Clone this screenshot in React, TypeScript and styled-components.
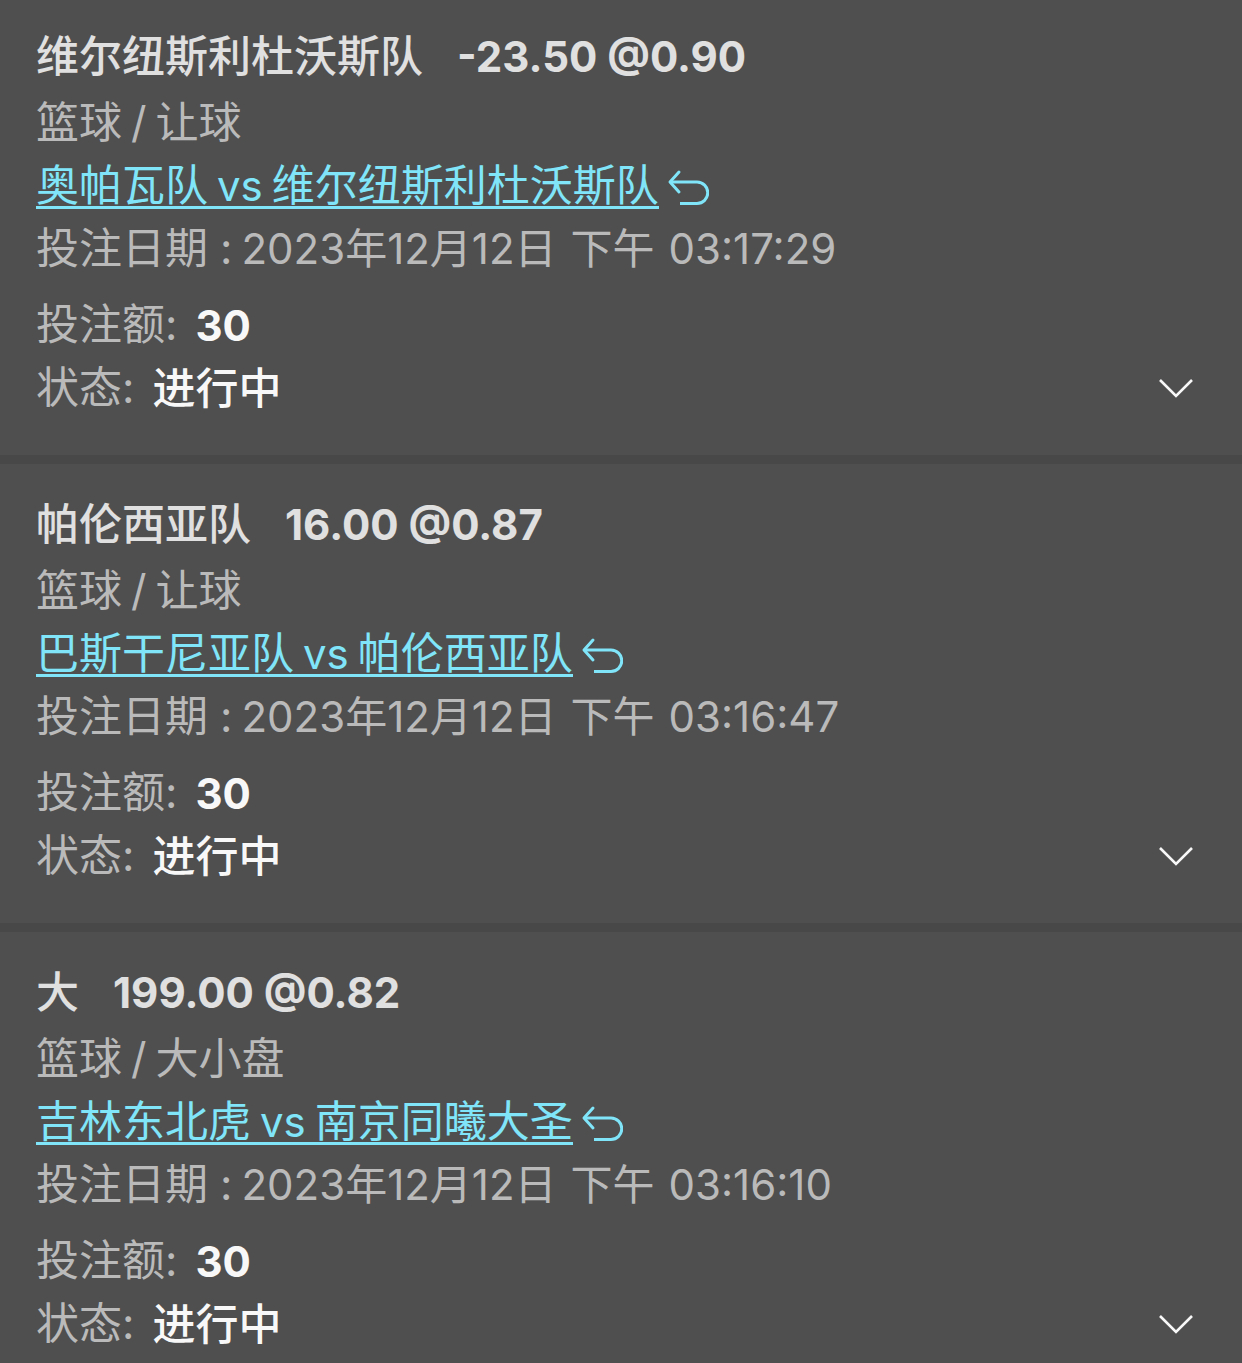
import React, { useState } from "react";
import styled, { createGlobalStyle } from "styled-components";

const GlobalStyle = createGlobalStyle`
  * { box-sizing: border-box; }
  body {
    margin: 0;
    background: #4f4f4f;
    font-family: Inter, "Noto Sans CJK SC", sans-serif;
    font-size: 43px;
    line-height: 63px;
    color: #bababa;
  }
`;

const List = styled.main`
  display: flex;
  flex-direction: column;
`;

const Card = styled.article`
  padding: 28px 36px 35px;
  border-bottom: 9px solid #484848;

  &:first-child {
    padding-top: 24px;
  }

  &:last-child {
    padding-bottom: 7px;
    border-bottom: 0;
  }
`;

const Title = styled.h2`
  display: flex;
  gap: 34px;
  margin: 0 0 2px;
  font-size: 43px;
  font-weight: 500;
  line-height: 65px;
  color: #e0e0e0;
`;

const Odds = styled.span`
  font-size: 42px;
  font-weight: 700;
`;

const Line = styled.div`
  display: flex;
  gap: 9px;
`;

const MatchLine = styled.div`
  display: flex;
  align-items: center;
  gap: 8px;
`;

const MatchLink = styled.a`
  display: flex;
  gap: 9px;
  margin: 11px 0 8px;
  border-bottom: 3px solid currentColor;
  line-height: 41px;
  color: #80e5f9;
  text-decoration: none;
`;

const Latin = styled.span`
  font-size: 42px;
`;

const Stamp = styled.time`
  display: flex;
  gap: 14px;
  font-size: 42px;
`;

const IconButton = styled.button<{ $color: string }>`
  display: flex;
  padding: 0;
  border: 0;
  background: none;
  color: ${(p) => p.$color};
  cursor: pointer;
`;

const Footer = styled.div`
  display: flex;
  align-items: flex-end;
  justify-content: space-between;
  margin-top: 14px;
  padding-right: 12px;
`;

const Facts = styled.dl`
  margin: 0;
`;

const Fact = styled.div`
  display: flex;
  gap: 18px;
`;

const Term = styled.dt`
  line-height: 61px;
`;

const Value = styled.dd<{ $numeric?: boolean }>`
  margin: 0;
  font-size: ${(p) => (p.$numeric ? 42 : 43)}px;
  font-weight: ${(p) => (p.$numeric ? 700 : 500)};
  color: #f8f8f8;
`;

const Toggle = styled(IconButton)`
  height: 65px;
  align-items: center;
`;

const ReturnIcon = () => (
  <svg width="42" height="40" viewBox="0 -4 42 40" fill="none" stroke="currentColor" strokeWidth="3" aria-hidden="true">
    <path d="M12 2 L3 12 L12 22" strokeLinecap="round" strokeLinejoin="round" />
    <path d="M3 12 H30 A10.75 10.75 0 0 1 30 33.5 H13" />
  </svg>
);

const ChevronIcon = () => (
  <svg width="36" height="20" viewBox="0 0 36 20" fill="none" stroke="currentColor" strokeWidth="2.6" aria-hidden="true">
    <path d="M2 2 L18 18 L34 2" />
  </svg>
);

type Bet = {
  pick: string;
  odds: string;
  market: string;
  home: string;
  away: string;
  time: string;
};

const bets: Bet[] = [
  {
    pick: "维尔纽斯利杜沃斯队",
    odds: "-23.50 @0.90",
    market: "让球",
    home: "奥帕瓦队",
    away: "维尔纽斯利杜沃斯队",
    time: "03:17:29",
  },
  {
    pick: "帕伦西亚队",
    odds: "16.00 @0.87",
    market: "让球",
    home: "巴斯干尼亚队",
    away: "帕伦西亚队",
    time: "03:16:47",
  },
  {
    pick: "大",
    odds: "199.00 @0.82",
    market: "大小盘",
    home: "吉林东北虎",
    away: "南京同曦大圣",
    time: "03:16:10",
  },
];

function BetCard({ bet }: { bet: Bet }) {
  const [open, setOpen] = useState(false);
  return (
    <Card>
      <Title>
        <span>{bet.pick}</span>
        <Odds>{bet.odds}</Odds>
      </Title>
      <Line>
        <span>篮球</span>
        <span>/</span>
        <span>{bet.market}</span>
      </Line>
      <MatchLine>
        <MatchLink href="#">
          <span>{bet.home}</span>
          <Latin>vs</Latin>
          <span>{bet.away}</span>
        </MatchLink>
        <IconButton type="button" $color="#80e5f9" aria-label="返回比赛">
          <ReturnIcon />
        </IconButton>
      </MatchLine>
      <Line>
        <span>投注日期 :</span>
        <Stamp>
          <span>2023年12月12日</span>
          <span>下午</span>
          <span>{bet.time}</span>
        </Stamp>
      </Line>
      <Footer>
        <Facts>
          <Fact>
            <Term>投注额:</Term>
            <Value $numeric>30</Value>
          </Fact>
          <Fact>
            <Term>状态:</Term>
            <Value>进行中</Value>
          </Fact>
        </Facts>
        <Toggle
          type="button"
          $color="#f8f8f8"
          aria-label="展开"
          aria-expanded={open}
          onClick={() => setOpen(!open)}
        >
          <ChevronIcon />
        </Toggle>
      </Footer>
    </Card>
  );
}

export default function App() {
  return (
    <>
      <GlobalStyle />
      <List>
        {bets.map((bet) => (
          <BetCard key={bet.time} bet={bet} />
        ))}
      </List>
    </>
  );
}
